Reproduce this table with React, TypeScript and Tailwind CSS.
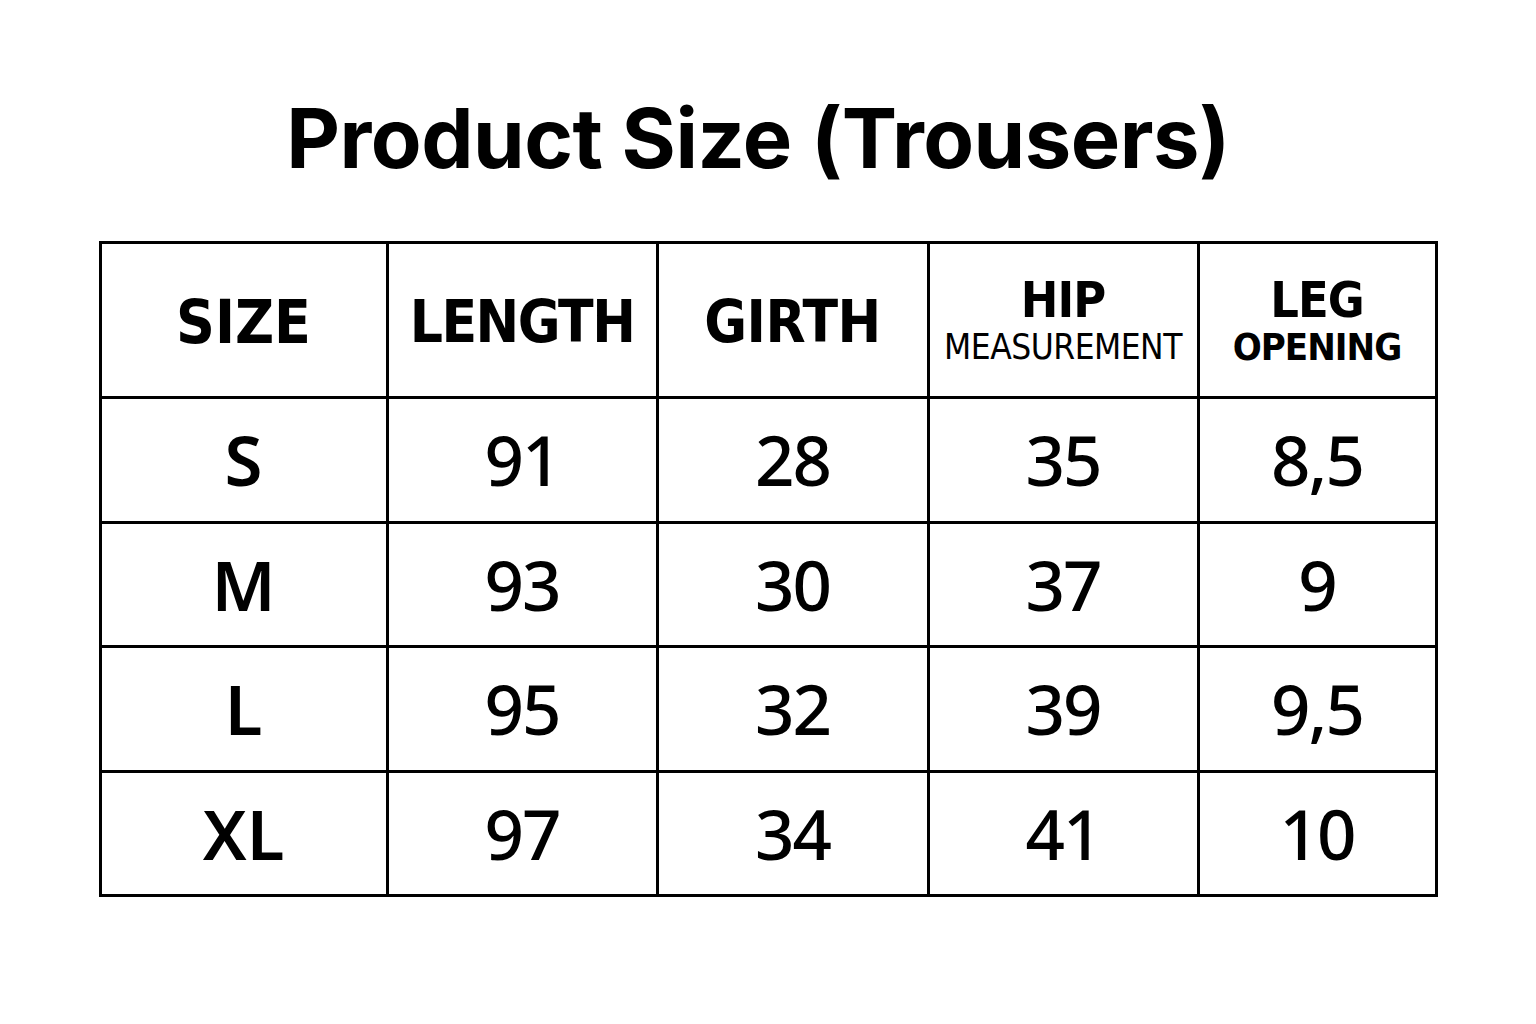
const rows = [
  { size: "S", length: "91", girth: "28", hip: "35", leg: "8,5" },
  { size: "M", length: "93", girth: "30", hip: "37", leg: "9" },
  { size: "L", length: "95", girth: "32", hip: "39", leg: "9,5" },
  { size: "XL", length: "97", girth: "34", hip: "41", leg: "10" },
]

const narrow = "font-['DejaVu_Sans_Condensed','DejaVu_Sans',sans-serif]"

export default function App() {
  return (
    <div className="min-h-[1024px] w-full bg-white pt-[97px] text-black">
      <h1 className="pr-5 text-center font-['Inter',sans-serif] text-[83px] font-bold leading-none tracking-[-0.5px]">
        Product Size (Trousers)
      </h1>

      <table className="mx-auto mt-[61px] w-[1336px] table-fixed border-collapse border-[3px] border-black">
        <colgroup>
          <col className="w-[287px]" />
          <col className="w-[270px]" />
          <col className="w-[271px]" />
          <col className="w-[270px]" />
          <col className="w-[238px]" />
        </colgroup>
        <thead>
          <tr className="h-[155px]">
            <th className={`border-[3px] border-black pt-1 text-[60px] font-bold leading-none tracking-[0px] ${narrow}`}>SIZE</th>
            <th className={`border-[3px] border-black pt-1 text-[58px] font-bold leading-none tracking-[-1.5px] ${narrow}`}>LENGTH</th>
            <th className={`border-[3px] border-black pt-1 text-[58px] font-bold leading-none tracking-[-0.5px] ${narrow}`}>GIRTH</th>
            <th className={`border-[3px] border-black leading-none ${narrow}`}>
              <div className="text-[50px] font-bold tracking-[-1px]">HIP</div>
              <div className="mt-[5px] text-[35px] font-normal tracking-[-0.5px]">MEASUREMENT</div>
            </th>
            <th className={`border-[3px] border-black leading-none ${narrow}`}>
              <div className="text-[50px] font-bold tracking-[-1px]">LEG</div>
              <div className="mt-[3px] text-[38px] font-bold tracking-[-1px]">OPENING</div>
            </th>
          </tr>
        </thead>
        <tbody className="font-['Noto_Sans',sans-serif] text-[69px] leading-none tracking-[-2px]">
          {rows.map((r) => (
            <tr key={r.size} className="h-[124.5px]">
              <td className="border-[3px] border-black text-center font-semibold tracking-normal">{r.size}</td>
              <td className="border-[3px] border-black text-center font-medium">{r.length}</td>
              <td className="border-[3px] border-black text-center font-medium">{r.girth}</td>
              <td className="border-[3px] border-black text-center font-medium">{r.hip}</td>
              <td className="border-[3px] border-black text-center font-medium">{r.leg}</td>
            </tr>
          ))}
        </tbody>
      </table>
    </div>
  )
}
